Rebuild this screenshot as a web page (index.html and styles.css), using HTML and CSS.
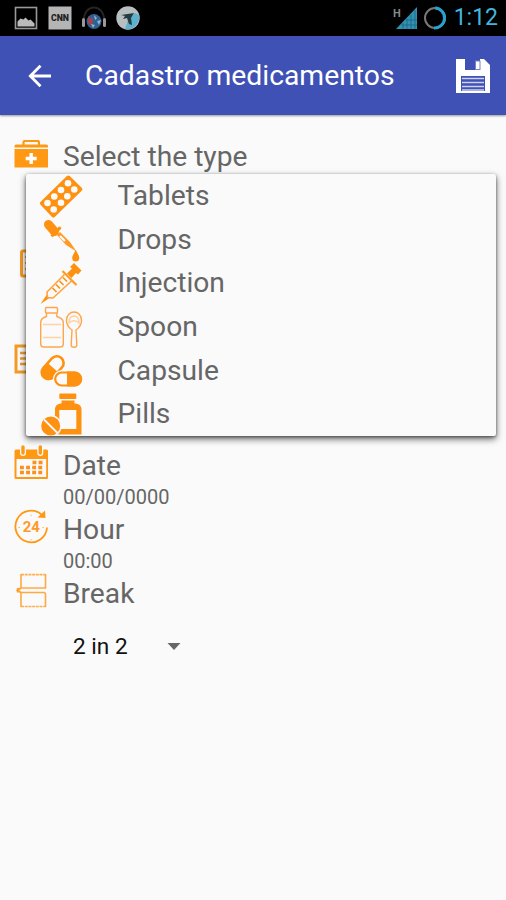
FILE: index.html
```
<!DOCTYPE html>
<html lang="pt-BR">
<head>
    <meta charset="UTF-8">
    <meta name="viewport" content="width=device-width, initial-scale=1.0">
    <title>Cadastro medicamentos</title>
    <link rel="stylesheet" href="styles.css">
</head>
<body>
    <div class="status-bar">
        <div class="notifications">
            <svg width="24" height="24" viewBox="0 0 24 24">
                <rect x="1.5" y="1.5" width="21" height="21" fill="none" stroke="#999" stroke-width="1.6"/>
                <path d="M3.5 20.5v-5l3-3 3 1 2-2 3 3 2-1 4 4v3z" fill="#bbb"/>
            </svg>
            <svg width="24" height="24" viewBox="0 0 24 24">
                <rect x=".5" y=".5" width="23" height="23" fill="#b5b5b5"/>
                <text class="cnn" x="12" y="15.3" text-anchor="middle" textLength="18" lengthAdjust="spacingAndGlyphs">CNN</text>
            </svg>
            <svg width="24" height="24" viewBox="0 0 24 24">
                <path d="M2 15C1 -3 23 -3 22 15" fill="none" stroke="#252525" stroke-width="2"/>
                <circle cx="12" cy="15.5" r="7.5" fill="#315f91"/>
                <path d="M6 11l5 2-1 7-4-3z" fill="#a34249"/>
                <path d="M12 9l3 3-2 2zM15 15l4-1-2 5zM9 18l4 1-2 3z" fill="#8fb4cc"/>
                <rect x="0" y="12" width="3" height="9" rx="1.5" fill="#999"/>
                <rect x="21" y="12" width="3" height="9" rx="1.5" fill="#999"/>
            </svg>
            <svg width="24" height="24" viewBox="0 0 24 24">
                <circle cx="12" cy="12" r="11.7" fill="#b9bfc0"/>
                <path d="M9 23l3-9 7-7 4 2a12 12 0 0 1-14 14z" fill="#5cb1cf"/>
                <path d="M5 9l13-2-3 5 1 7-3-1-2-6-4 1 2-3z" fill="#243c42"/>
            </svg>
        </div>
        <div class="system">
            <svg width="24" height="24" viewBox="0 0 24 24">
                <text class="network" x="0" y="10.5">H</text>
                <path d="M24 1v22H3z" fill="#3190b3"/>
                <path d="M10 17v6M14 13v10M18 9v14M22 4v19M8 19h16M13 14h11" stroke="#1b6683" stroke-width=".8"/>
            </svg>
            <svg width="24" height="24" viewBox="0 0 24 24">
                <circle cx="12" cy="12" r="10" fill="none" stroke="#777" stroke-width="2"/>
                <path d="M12 2a10 10 0 1 1-1 20" fill="none" stroke="#25a3cf" stroke-width="3"/>
            </svg>
            <span class="clock">1:12</span>
        </div>
    </div>

    <div class="app-bar">
        <svg class="back" width="24" height="24" viewBox="0 0 24 24">
            <path d="M23 12H2M12.5 1.8L2.3 12l10.2 10.2" fill="none" stroke="#fff" stroke-width="2.8"/>
        </svg>
        <h1 class="title">Cadastro medicamentos</h1>
        <svg class="save" width="36" height="36" viewBox="0 0 36 36">
            <path d="M1 1h7v13h19V1h2l6 6v28H1z" fill="#fff"/>
            <path d="M9 1h10v11H9z" fill="#3f51b5"/>
            <path d="M8 1h2v13H8zM8 12h19v3H8zM25 1h3v13h-3z" fill="#fff"/>
            <path d="M19 1h5v2h-5z" fill="#3f51b5"/>
            <rect x="20.5" y="3" width="4.5" height="8.5" fill="#fff" stroke="#7581cb"/>
            <rect x="6" y="18" width="24" height="15" fill="#3f51b5"/>
            <path d="M7 20.5h22M7 24.5h22M7 28.5h22M7 32h22" stroke="#cdd2ee" stroke-width="1.5"/>
        </svg>
    </div>

    <div class="form">
        <div class="field type">
            <svg class="icon" width="36" height="36" viewBox="0 0 36 36">
                <path d="M9.5 6V2.500Q9.500 1 11 1h12.500q1.500 0 1.500 1.500V6" fill="none" stroke="#ff9813" stroke-width="2.200"/>
                <path d="M.5 6q0-1.500 1.500-1.500h30.500Q34 4.500 34 6v1.500H.5zM.5 9H34v18.500H.5z" fill="#ff9813"/>
                <path d="M17.200 13v11M11.700 18.500h11" stroke="#fff" stroke-width="3.400"/>
            </svg>
            <span class="label">Select the type</span>
        </div>

        <div class="field name">
            <svg class="icon" width="36" height="36" viewBox="0 0 36 36">
                <rect x="7.500" y="2" width="22" height="25" rx="1.500" fill="none" stroke="#f39a25" stroke-width="3"/>
                <path d="M11 8h14M11 14h14M11 20h14" stroke="#ff9813" stroke-width="2"/>
            </svg>
        </div>

        <div class="field dose">
            <svg class="icon" width="36" height="36" viewBox="0 0 36 36">
                <rect x="2" y="2" width="30" height="26" fill="none" stroke="#f39a25" stroke-width="3"/>
                <path d="M6 9h22M6 14.500h22M6 20h22" stroke="#e99a35" stroke-width="2.400"/>
            </svg>
        </div>

        <div class="field">
            <svg class="icon" width="36" height="36" viewBox="0 0 36 36">
                <path d="M.5 6q0-1.500 1.500-1.500h30.500Q34 4.500 34 6v26.500q0 1.500-1.500 1.500H2Q.5 34 .5 32.500z" fill="#ff9813"/>
                <path d="M2.500 14h29.700v18H2.500z" fill="#fafafa"/>
                <path d="M9 4v4M26.300 4v4" stroke="#fafafa" stroke-width="6" stroke-linecap="round"/>
                <path d="M9 2v6M26.300 2v6" stroke="#ff9813" stroke-width="3.400" stroke-linecap="round"/>
                <path d="M18.500 17.500h11M6 22.500h24M6 27.500h24" stroke="#ff8f1c" stroke-width="3.600" stroke-dasharray="3.900 2.200"/>
            </svg>
            <div class="text">
                <span class="label">Date</span>
                <span class="value">00/00/0000</span>
            </div>
        </div>

        <div class="field">
            <svg class="icon" width="36" height="36" viewBox="0 0 36 36">
                <path d="M27.500 5.500A15.800 15.800 0 1 0 33 18.500" fill="none" stroke="#ff9813" stroke-width="1.800"/>
                <path d="M23.500 8.500l7.500-7 .5 7.500z" fill="#ff9813"/>
                <path d="M17 5.500v1.500M17 30v1.500M4.500 18.500H6M28.500 18.500H30" stroke="#ffb866"/>
                <text class="hours" x="17.300" y="22.800" text-anchor="middle">24</text>
            </svg>
            <div class="text">
                <span class="label">Hour</span>
                <span class="value">00:00</span>
            </div>
        </div>

        <div class="field break">
            <svg class="icon" width="36" height="36" viewBox="0 0 36 36">
                <path d="M7 1.700h24.500M7 33.500h24.500" stroke="#ffad4d" stroke-width="1.700" stroke-dasharray="3 .7"/>
                <path d="M7 1v14h24.500V1M7 34V19.500h22.500q2 0 2 2V34" fill="none" stroke="#ffa944" stroke-width="1.600"/>
                <path d="M7 15l-3.500 2.500L7 19.500M3.800 15v4.500" fill="none" stroke="#ffa132" stroke-width="2"/>
            </svg>
            <div class="text">
                <span class="label">Break</span>
            </div>
        </div>

        <div class="spinner">
            <span>2 in 2</span>
            <svg width="14" height="8" viewBox="0 0 14 8"><path d="M.5 0h13L7 7z" fill="#666"/></svg>
        </div>

        <div class="popup">
            <div class="option">
                <svg width="44" height="44" viewBox="0 0 44 44">
                    <path d="M28.300 3.500L40.300 15.300 13.300 41.500 2 29.300z" fill="#ff9110" stroke="#ff9110" stroke-width="4" stroke-linejoin="round"/>
                    <g fill="#fafafa">
                        <circle cx="28" cy="9.300" r="3.300"/><circle cx="34.300" cy="15.500" r="3.300"/>
                        <circle cx="21" cy="16" r="3.300"/><circle cx="27.300" cy="22.300" r="3.300"/>
                        <circle cx="14.300" cy="22.500" r="3.300"/><circle cx="21" cy="28.700" r="3.300"/>
                        <circle cx="7.500" cy="29" r="3.300"/><circle cx="13.700" cy="35.500" r="3.300"/>
                    </g>
                </svg>
                <span>Tablets</span>
            </div>
            <div class="option">
                <svg width="44" height="44" viewBox="0 0 44 44">
                    <path d="M8.500 6.500l6 7" stroke="#ff9110" stroke-width="9" stroke-linecap="round"/>
                    <path d="M11 16.500q-1 1 .5 2t2.500-.5l7-7q1-1-.5-2t-2.500.5z" fill="#ff9110"/>
                    <path d="M17 17l3-3 10 10 6.500 9.500L26 27z" fill="#ff9a27"/>
                    <path d="M20 18l5 5" stroke="#fafafa" stroke-width="2.200"/>
                    <path d="M35.700 31.500c1 3 3.500 5.500 3.500 8.500a3.500 3.500 0 0 1-7 0c0-3 2.500-5 3.500-8.500z" fill="#ff9110"/>
                </svg>
                <span>Drops</span>
            </div>
            <div class="option">
                <svg width="44" height="44" viewBox="0 0 44 44">
                    <path d="M.5 43l6-9 3 3z" fill="#ff9110"/>
                    <path d="M24.500 13.500L7 31l.5 5.500 5.500.5 19-17.500" fill="#fafafa" stroke="#ffa340" stroke-width="1.600"/>
                    <path d="M12.500 27l4 4M16 23.500l4 4M19.500 20l4 4M23 16.500l4 4" stroke="#ff9110" stroke-width="1.700"/>
                    <path d="M22.500 10L36.500 24" stroke="#ff9a27" stroke-width="2.200"/>
                    <path d="M27 12.500l5-5-2-1.500 4-4 7.500 7.500-3.500 4-2-1.500-4.500 5z" fill="#ff9110"/>
                </svg>
                <span>Injection</span>
            </div>
            <div class="option">
                <svg width="44" height="44" viewBox="0 0 44 44">
                    <g fill="none" stroke="#ffa64d" stroke-width="1.400">
                        <rect x="5.500" y="2.500" width="12" height="5.500" rx="1"/>
                        <path d="M6.500 8v3.500C3 12.500 .7 14 .7 17.500V39q0 3 3 3h16.600q3 0 3-3V17.500c0-3.500-3-5-6.500-6V8"/>
                        <path d="M3 19.500h18M3 32.500h18" stroke="#ffd1a3"/>
                        <path d="M32 25c-3-2-5.500-5-5.500-9.500C26.500 10 30 7 34 7s7.500 3 7.500 8.500c0 4.500-2.500 7.500-5.500 9.500l.8 15q0 2.300-2.800 2.300T31.200 40z"/>
                        <path d="M29 18c0-5 2-7 5-7s5 2 5 7c-2-3-8-3-10 0z" stroke="#ffd1a3"/>
                    </g>
                </svg>
                <span>Spoon</span>
            </div>
            <div class="option">
                <svg width="44" height="44" viewBox="0 0 44 44">
                    <g transform="rotate(-48 12.300 19)">
                        <rect x="-.2" y="12.300" width="26" height="13.500" rx="6.700" fill="#fafafa" stroke="#ff9110" stroke-width="2.600"/>
                        <path d="M13 11.500v15H6.500a7.500 7.500 0 0 1 0-15z" fill="#ff9110"/>
                    </g>
                    <rect x="13" y="21" width="30" height="18" rx="9" fill="#fafafa"/>
                    <rect x="15.200" y="23.500" width="26" height="13" rx="6.500" fill="#fafafa" stroke="#ff9110" stroke-width="2.200"/>
                    <path d="M27 22.500h7.500a7.500 7.500 0 0 1 0 15H27z" fill="#ff9110"/>
                </svg>
                <span>Capsule</span>
            </div>
            <div class="option">
                <svg width="44" height="44" viewBox="0 0 44 44">
                    <rect x="19.300" y="1.500" width="17" height="5.500" rx="1" fill="#ff9110"/>
                    <path d="M21.500 8.500h13v3c4 0 7 2 7 6v25H15V17.500c0-4 3-6 6.500-6z" fill="#ff9110"/>
                    <rect x="19.300" y="18" width="17" height="19" fill="#fafafa"/>
                    <circle cx="10.700" cy="34" r="11" fill="#fafafa"/>
                    <circle cx="10.700" cy="34" r="9.500" fill="#ff9110"/>
                    <path d="M4 27.500L17.500 41" stroke="#fafafa" stroke-width="1.800"/>
                </svg>
                <span>Pills</span>
            </div>
        </div>
    </div>
</body>
</html>
```
FILE: styles.css
```
:root {
    --primary-color: #3f51b5;
    --background: #fafafa;
    --text-color: #666;
}

* {
    box-sizing: border-box;
}

body {
    margin: 0;
    height: 900px;
    overflow: hidden;
    background-color: var(--background);
    color: var(--text-color);
    font-family: Roboto, sans-serif;
    display: flex;
    flex-direction: column;
}

svg {
    display: block;
    flex: none;
}

.status-bar {
    height: 36px;
    background-color: #000;
    padding: 0 8px 0 14px;
    display: flex;
    align-items: center;
    justify-content: space-between;
}

.notifications {
    display: flex;
    gap: 10px;
}

.system {
    display: flex;
    align-items: center;
    gap: 6px;
}

.system svg {
    overflow: visible;
}

.clock {
    color: #43b5dd;
    font-size: 23px;
    line-height: 36px;
    margin-left: 1px;
}

.cnn {
    font-size: 9px;
    font-weight: 900;
    fill: #222;
}

.network {
    font-size: 11px;
    font-weight: bold;
    fill: #888;
}

.app-bar {
    height: 79px;
    flex: none;
    padding: 0 15px 0 28px;
    background-color: var(--primary-color);
    box-shadow: 0 1px 2px rgba(0,0,0,0.4);
    display: flex;
    align-items: center;
}

.title {
    flex: 1;
    margin: 0 0 0 33px;
    color: #fff;
    font-size: 28.3px;
    font-weight: normal;
    line-height: 40px;
    white-space: nowrap;
}

.form {
    position: relative;
    flex: 1;
    padding: 25px 14px 0;
}

.field {
    height: 64px;
    display: flex;
    align-items: flex-start;
    gap: 13px;
}

.text {
    display: flex;
    flex-direction: column;
    padding-top: 4px;
}

.label {
    font-size: 28.2px;
    line-height: 34px;
}

.value {
    font-size: 20px;
    line-height: 28px;
}

.type {
    height: 109px;
}

.name {
    height: 95px;
}

.dose {
    height: 101px;
}

.break {
    height: 60px;
}

.hours {
    font-size: 15px;
    font-weight: bold;
    fill: #ff9a2a;
}

.spinner {
    width: 120px;
    margin-left: 59px;
    padding-right: 12px;
    display: flex;
    align-items: center;
    justify-content: space-between;
    color: #111;
    font-size: 22.6px;
    line-height: 28px;
}

/* 下拉菜单 */
.popup {
    position: absolute;
    top: 59px;
    left: 26px;
    width: 470px;
    height: 262px;
    padding-left: 14px;
    background-color: var(--background);
    border-radius: 2px;
    box-shadow: 0 3px 7px rgba(0,0,0,0.6), 0 1px 3px rgba(0,0,0,0.4);
    display: flex;
    flex-direction: column;
}

.option {
    flex: 1;
    min-height: 0;
    display: flex;
    align-items: center;
    gap: 33.5px;
    font-size: 28.2px;
    line-height: 34px;
}
```
